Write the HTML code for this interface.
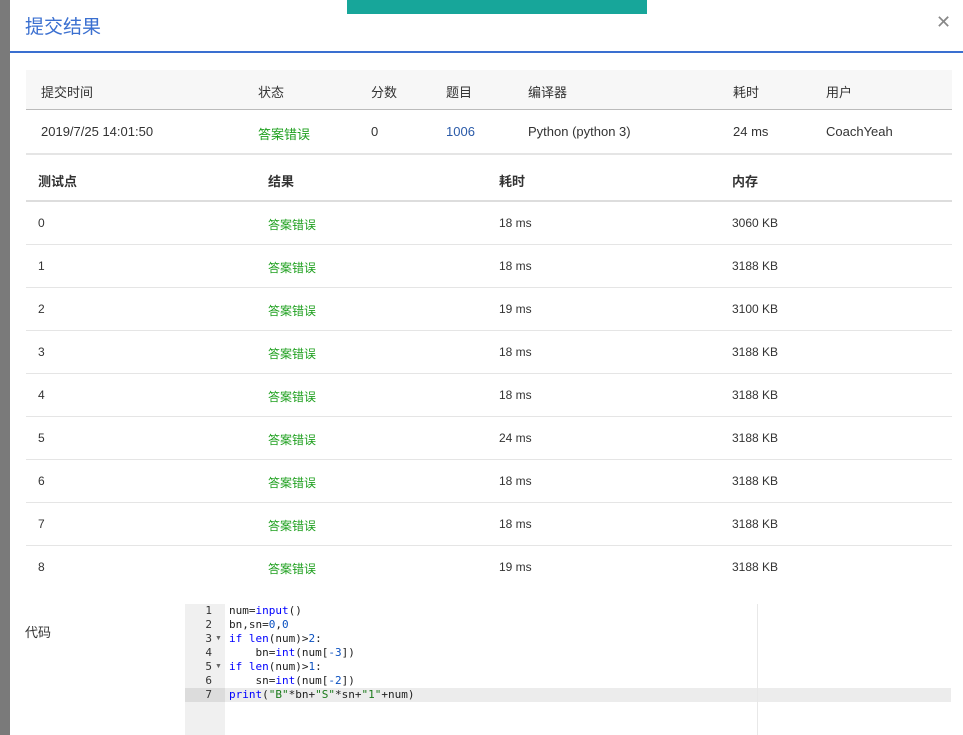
<!DOCTYPE html>
<html><head><meta charset="utf-8"><style>
body{margin:0;width:963px;height:735px;position:relative;overflow:hidden;background:#fff;font-family:"Liberation Sans","Noto Sans CJK SC",sans-serif;font-size:13px;color:#333}
.a{position:absolute;white-space:nowrap}
.g{color:#1fa01f}
.hl{position:absolute;left:26px;width:926px;height:1px;background:#e5e5e5}
.code{position:absolute;left:229px;font-family:"DejaVu Sans Mono","Liberation Mono",monospace;font-size:11px;line-height:14px;color:#222}
.ln{position:absolute;left:185px;width:27px;text-align:right;font-family:"DejaVu Sans Mono",monospace;font-size:11px;line-height:14px;color:#333}
.k{color:#0000ff}.n{color:#0a50c0}.s{color:#1a7a1a}
</style></head><body>
<div class="a" style="left:0;top:0;width:10px;height:735px;background:#7a7a7a"></div>
<div class="a" style="left:347px;top:0;width:300px;height:14px;background:#17a69a"></div>
<div class="a" style="left:25px;top:12px;font-size:19px;color:#3a6fd0">提交结果</div>
<div class="a" style="left:936px;top:12px;font-size:18px;color:#888">✕</div>
<div class="a" style="left:10px;top:51px;width:953px;height:2px;background:#3a6fd0"></div>
<div class="a" style="left:26px;top:70px;width:926px;height:39px;background:#f7f7f7;border-bottom:1px solid #bbb"></div>
<div class="a" style="left:41px;top:82px">提交时间</div>
<div class="a" style="left:258px;top:82px">状态</div>
<div class="a" style="left:371px;top:82px">分数</div>
<div class="a" style="left:446px;top:82px">题目</div>
<div class="a" style="left:528px;top:82px">编译器</div>
<div class="a" style="left:733px;top:82px">耗时</div>
<div class="a" style="left:826px;top:82px">用户</div>
<div class="a" style="left:41px;top:124px">2019/7/25 14:01:50</div>
<div class="a g" style="left:258px;top:124px">答案错误</div>
<div class="a" style="left:371px;top:124px">0</div>
<div class="a" style="left:446px;top:124px;color:#2a5aa8">1006</div>
<div class="a" style="left:528px;top:124px">Python (python 3)</div>
<div class="a" style="left:733px;top:124px">24 ms</div>
<div class="a" style="left:826px;top:124px">CoachYeah</div>
<div class="hl" style="top:153px;height:2px"></div>
<div class="a" style="left:38px;top:171px;font-weight:bold">测试点</div>
<div class="a" style="left:268px;top:171px;font-weight:bold">结果</div>
<div class="a" style="left:499px;top:171px;font-weight:bold">耗时</div>
<div class="a" style="left:732px;top:171px;font-weight:bold">内存</div>
<div class="hl" style="top:200px;height:2px;background:#ddd"></div>
<div id="rows"></div>
<script>
var t=[18,18,19,18,18,24,18,18,19],m=[3060,3188,3100,3188,3188,3188,3188,3188,3188],h='';
for(var i=0;i<9;i++){var y=216+43*i;h+='<div class="a" style="left:38px;top:'+y+'px;font-size:12px">'+i+'</div><div class="a g" style="left:268px;top:'+y+'px;font-size:12px">答案错误</div><div class="a" style="left:499px;top:'+y+'px;font-size:12px">'+t[i]+' ms</div><div class="a" style="left:732px;top:'+y+'px;font-size:12px">'+m[i]+' KB</div>';if(i<8)h+='<div class="hl" style="top:'+(244+43*i)+'px"></div>';}
document.getElementById('rows').innerHTML=h;
</script>
<div class="a" style="left:25px;top:622px">代码</div>
<div class="a" style="left:185px;top:604px;width:40px;height:131px;background:#f0f0f0"></div>
<div class="a" style="left:185px;top:688px;width:40px;height:14px;background:#dcdcdc"></div>
<div class="a" style="left:225px;top:688px;width:726px;height:14px;background:#ececec"></div>
<div class="a" style="left:757px;top:604px;width:1px;height:131px;background:#e8e8e8"></div>
<div class="ln" style="top:604px">1<br>2<br>3<br>4<br>5<br>6<br>7</div>
<div class="a" style="left:215px;top:604px;font-size:7px;line-height:14px;color:#666"><br><br>▼<br><br>▼</div>
<div class="code" style="top:604px">num=<span class="k">input</span>()<br>bn,sn=<span class="n">0</span>,<span class="n">0</span><br><span class="k">if</span> <span class="k">len</span>(num)&gt;<span class="n">2</span>:<br>&nbsp;&nbsp;&nbsp;&nbsp;bn=<span class="k">int</span>(num[<span class="n">-3</span>])<br><span class="k">if</span> <span class="k">len</span>(num)&gt;<span class="n">1</span>:<br>&nbsp;&nbsp;&nbsp;&nbsp;sn=<span class="k">int</span>(num[<span class="n">-2</span>])<br><span class="k">print</span>(<span class="s">"B"</span>*bn+<span class="s">"S"</span>*sn+<span class="s">"1"</span>+num)</div>
</body></html>
